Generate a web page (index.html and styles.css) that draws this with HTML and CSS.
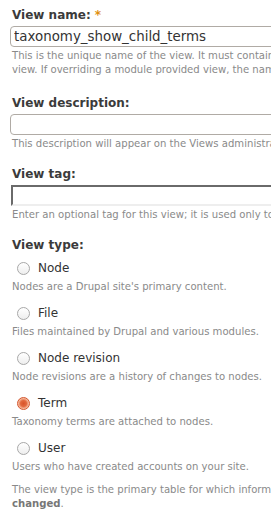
FILE: index.html
```html
<!DOCTYPE html>
<html lang="en">
<head>
    <meta charset="UTF-8">
    <meta name="viewport" content="width=device-width, initial-scale=1.0">
    <title>Add view</title>
    <link rel="stylesheet" href="styles.css">
</head>
<body>
    <div class="view-form">
        <div class="form-item">
            <label for="view-name">View name: <span class="required">*</span></label>
            <input type="text" id="view-name" class="form-text" value="taxonomy_show_child_terms">
            <div class="description">This is the unique name of the view. It must contain only alphanumeric characters and underscores; it is used to identify the<br>view. If overriding a module provided view, the name must match the module's view.</div>
        </div>

        <div class="form-item">
            <label for="view-description">View description:</label>
            <input type="text" id="view-description" class="form-text">
            <div class="description">This description will appear on the Views administrative UI to tell you what the view is about.</div>
        </div>

        <div class="form-item">
            <label for="view-tag">View tag:</label>
            <input type="text" id="view-tag" class="form-text plain">
            <div class="description">Enter an optional tag for this view; it is used only to help sort views on the administrative page.</div>
        </div>

        <div class="form-item">
            <label>View type:</label>
            <div class="radios">
                <div class="radio">
                    <label class="option"><span class="radio-dot"></span>Node</label>
                    <div class="description">Nodes are a Drupal site's primary content.</div>
                </div>
                <div class="radio">
                    <label class="option"><span class="radio-dot"></span>File</label>
                    <div class="description">Files maintained by Drupal and various modules.</div>
                </div>
                <div class="radio">
                    <label class="option"><span class="radio-dot"></span>Node revision</label>
                    <div class="description">Node revisions are a history of changes to nodes.</div>
                </div>
                <div class="radio">
                    <label class="option"><span class="radio-dot checked"></span>Term</label>
                    <div class="description">Taxonomy terms are attached to nodes.</div>
                </div>
                <div class="radio">
                    <label class="option"><span class="radio-dot"></span>User</label>
                    <div class="description">Users who have created accounts on your site.</div>
                </div>
            </div>
            <div class="description">The view type is the primary table for which information is being retrieved. The view type cannot be<br><strong>changed</strong>.</div>
        </div>
    </div>
</body>
</html>
```

FILE: styles.css
```css
body {
    margin: 0;
    background: #fff;
    font-family: 'DejaVu Sans', Verdana, sans-serif;
    color: #333;
    overflow: hidden;
}

.view-form {
    padding: 7px 0 0 12px;
    width: 700px;
}

.form-item {
    margin-bottom: 15px;
}

.form-item:first-child {
    margin-bottom: 18px;
}

.form-item > label {
    display: block;
    font-size: 12px;
    font-weight: bold;
    color: #3b3b3b;
    line-height: 16px;
    margin-bottom: 3px;
}

.required {
    color: #e09010;
}

.form-text {
    display: block;
    box-sizing: border-box;
    width: 300px;
    height: 21px;
    margin: 0 0 0 -2px;
    padding: 1px 3px;
    border: 1px solid #b0aba5;
    border-radius: 4px;
    font-family: 'DejaVu Sans', Verdana, sans-serif;
    font-size: 13.4px;
    color: #333;
    background: #fff;
}

.form-text.plain {
    border-radius: 0;
    border-width: 2px 1px 2px 2px;
    border-color: #6a6a6a #6a6a6a #eeeeee #6a6a6a;
    margin-left: -1px;
}

.description {
    font-size: 10.1px;
    line-height: 14px;
    color: #8a8a8a;
    margin-top: 2px;
    white-space: nowrap;
}

.description strong {
    color: #777;
}

.radios {
    margin-top: 5px;
}

.radio {
    margin-bottom: 9px;
}

.option {
    display: flex;
    align-items: center;
    font-size: 12px;
    color: #333;
    line-height: 20px;
    margin-left: 5px;
}

.radio .description {
    margin-top: 2px;
}

.radio-dot {
    box-sizing: border-box;
    width: 13px;
    height: 13px;
    border: 1px solid #a8a8a8;
    border-radius: 50%;
    background: linear-gradient(#fff, #eee);
    margin-right: 8px;
}

.radio-dot.checked {
    border-color: #d3562e;
    background: radial-gradient(circle, #d9532a 0, #e2683e 3px, #f5b497 5px, #f7c7b2 6px);
}
```
